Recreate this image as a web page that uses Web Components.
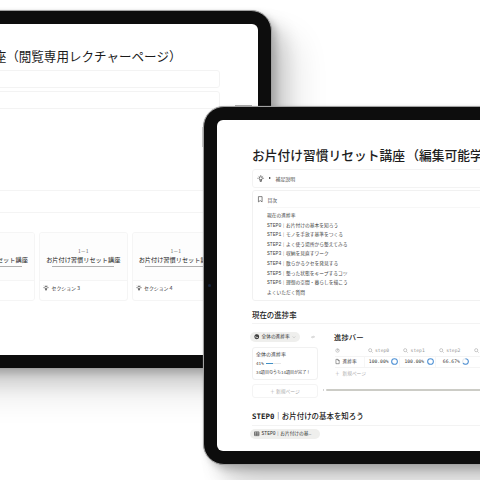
<!DOCTYPE html>
<html lang="ja">
<head>
<meta charset="utf-8">
<title>お片付け習慣リセット講座</title>
<style>
html,body{margin:0;padding:0}
body{width:480px;height:480px;overflow:hidden;background:#fff;color:#222;font-family:"Noto Sans CJK JP",sans-serif;text-spacing-trim:space-all}
</style>
</head>
<body>
<device-stage></device-stage>
<script>
const define = (name, html) => {
  const t = document.createElement('template');
  t.innerHTML = html;
  customElements.define(name, class extends HTMLElement {
    constructor() {
      super();
      this.attachShadow({mode: 'open'}).append(t.content.cloneNode(true));
    }
  });
};

const icons = {
  bulb: '<circle cx="8" cy="7" r="3.4"/><path d="M6.6 10v3.6h2.8V10M8 0v1.6M1 7h1.6M13.4 7H15M3 2l1.2 1.2M13 2l-1.2 1.2"/>',
  bookmark: '<path d="M3.5 1.5h9v13L8 11.2l-4.500 3.300z"/>',
  target: '<circle cx="8" cy="8" r="5.500"/><path d="M8 2.500v5.500l4-3"/>',
  search: '<circle cx="7" cy="7" r="5"/><path d="M10.800 10.800L15 15"/>',
  page: '<path d="M3 1h6.500L13.500 5v10H3zM9.500 1v4h4"/>',
  table: '<path d="M1.500 2.500h13v11h-13zM1.500 6.200h13M1.500 9.800h13M8 2.500v11"/>',
  sort: '<path d="M2 6h12l-3-3M14 10H2l3 3"/>',
  chevron: '<path d="M3 6l5 5 5-5"/>',
  ring: '<circle cx="8" cy="8" r="6.500"/>',
  ring66: '<circle cx="8" cy="8" r="6.500" stroke="#e4e9ee"/><path d="M8 1.500a6.500 6.500 0 1 1-5.630 9.750"/>'
};
customElements.define('line-icon', class extends HTMLElement {
  constructor() { super(); this.attachShadow({mode: 'open'}); }
  connectedCallback() {
    this.shadowRoot.innerHTML = `<style>:host{display:inline-flex;flex:none;width:var(--s,6px);height:var(--s,6px)}svg{width:100%;height:100%;overflow:visible}</style>
    <svg viewBox="0 0 16 16" fill="none" stroke="currentColor" stroke-width="${this.getAttribute('weight') || 1.6}">${icons[this.getAttribute('name')]}</svg>`;
  }
});

define('tablet-frame', `<style>
:host{display:block;box-sizing:border-box;border:1px solid #a2a2a2;border-radius:21px;background:#0d0d0d;padding:13px;
box-shadow:0 0 1px #bbb,4px 4px 7px rgba(0,0,0,.18),13px 13px 18px rgba(0,0,0,.14),26px 26px 32px rgba(0,0,0,.10)}
main{height:100%;background:#fff;border-radius:6px;overflow:hidden;box-sizing:border-box}
</style><main><slot></slot></main>`);

define('outline-box', `<style>:host{display:block;box-sizing:border-box;border:1px solid #f3f3f3;border-radius:3px}</style><slot></slot>`);

define('lesson-card', `<style>
:host{display:flex;flex-direction:column;flex:none;box-sizing:border-box;width:88.500px;height:69px;border:1px solid #f5f5f5;border-radius:3px;overflow:hidden;white-space:nowrap}
.cover{height:48px;box-sizing:border-box;background:#fdfdfd;border-bottom:1px solid #f5f5f5;display:flex;flex-direction:column;align-items:center;padding-top:14px}
.no{font-size:5px;line-height:8px;color:#666}
.name{font-size:6.200px;line-height:10px;color:#222}
i{width:62px;height:1px;background:#b0b0b0;margin-top:1px}
.foot{flex:1;display:flex;align-items:center;gap:2.500px;padding:0 0 6px 3px;font-size:4.900px;color:#333}
</style><div class="cover"><span class="no">1－1</span><span class="name">お片付け習慣リセット講座</span><i></i></div>
<div class="foot"><line-icon name="bulb"></line-icon><slot></slot></div>`);

define('lecture-page', `<style>
:host{display:block}
h1{margin:18px 0 0;height:26px;display:flex;justify-content:flex-end;align-items:center;padding-right:76.500px;font-size:12.550px;font-weight:400;white-space:nowrap;color:#1a1a1a}
outline-box{height:18px;margin:0 38px 2.500px 0}
h1+outline-box{margin-top:2px}
hr{border:0;height:1px;background:#f4f4f4;margin:0}
.one{margin-top:81.500px}.two{margin-top:21px}
.cards{display:flex;gap:4px;margin:19px 0 0 62.500px}
</style><h1>座（閲覧専用レクチャーページ）</h1><outline-box></outline-box><outline-box></outline-box>
<hr class="one"><hr class="two">
<div class="cards"><lesson-card>セクション２</lesson-card><lesson-card>セクション３</lesson-card><lesson-card>セクション４</lesson-card></div>`);

define('contents-list', `<style>
:host{display:block;height:111px;box-sizing:border-box;border:1px solid #f1f1f1;border-radius:3px;white-space:nowrap;color:#444}
header{height:16px;display:flex;align-items:center;gap:4px;padding-left:4px;font-size:4.800px}
hr{border:0;height:1px;background:#f7f7f7;margin:0 0 3px 14px}
ul{list-style:none;margin:0;padding:0 0 0 14px;font:4.750px/9.620px "Liberation Mono","Noto Sans CJK JP",monospace}
li{height:9.620px}
</style><header><line-icon name="bookmark" style="--s:6.500px"></line-icon>目次</header><hr>
<ul><li>現在の進捗率</li><li>STEP0｜お片付けの基本を知ろう</li><li>STEP1｜モノを手放す基準をつくる</li><li>STEP2｜よく使う場所から整えてみる</li><li>STEP3｜収納を見直すワーク</li><li>STEP4｜散らかるクセを発見する</li><li>STEP5｜整った状態をキープするコツ</li><li>STEP6｜理想の空間・暮らしを描こう</li><li>よくいただく質問</li></ul>`);

define('section-title', `<style>
:host{display:flex;align-items:center;box-sizing:border-box;height:17px;border-bottom:1px solid #f3f3f3;font:500 7.450px/12px "DejaVu Sans Mono","Noto Sans CJK JP",monospace;white-space:nowrap;color:#222}
</style><slot></slot>`);

define('view-pill', `<style>
:host{display:flex;width:fit-content;align-items:center;box-sizing:border-box;height:10px;border-radius:5px;background:#efefed;padding:0 4px;gap:2px;font:4.700px/10px "Liberation Mono","Noto Sans CJK JP",monospace;white-space:nowrap;color:#333}
</style><slot></slot>`);

define('overall-progress', `<style>
:host{display:block;width:66px;white-space:nowrap;font-size:4.800px;color:#444}
.bar{display:flex;justify-content:space-between;align-items:center;height:10px;margin-left:-2px}
.card{box-sizing:border-box;height:33px;margin-top:5.500px;border:1px solid #f1f1f1;border-radius:3px;padding:0 3px;display:flex;flex-direction:column;justify-content:space-evenly;line-height:8px}
.t1{font-size:5px}
.p{display:flex;align-items:center;gap:2.500px;font:4.300px/8px "DejaVu Sans Mono",monospace}
.t{width:15px;height:1.300px;background:#e8e8e8}.t b{display:block;width:7px;height:100%;background:#3f8fc6}
.n{font:4.050px/8px "DejaVu Sans Mono","Noto Sans CJK JP",monospace}
.new{box-sizing:border-box;height:14px;margin-top:3.500px;border:1px solid #f4f4f4;border-radius:3px;display:flex;align-items:center;justify-content:center;color:#aaa}
</style><div class="bar"><view-pill><line-icon name="target" weight="3" style="--s:5.500px"></line-icon>全体の進捗率<line-icon name="chevron" style="--s:4px;color:#999"></line-icon></view-pill><line-icon name="sort" style="--s:4px;color:#aaa;margin-right:3px"></line-icon></div>
<div class="card"><span class="t1">全体の進捗率</span><div class="p">41%<span class="t"><b></b></span></div><span class="n">34項目のうち14項目が完了！</span></div>
<div class="new">＋ 新規ページ</div>`);

define('progress-table', `<style>
:host{display:block;flex:1;white-space:nowrap;font:4.700px/10px "DejaVu Sans Mono","Noto Sans CJK JP",monospace;color:#444}
h3{margin:0 0 4px 7px;font:500 7.400px/10px "Noto Sans CJK JP",sans-serif;color:#222}
.r{display:grid;grid-template-columns:28.500px 35.600px 35.600px 35.600px 35.600px;height:11px;align-items:center;margin-left:8px;box-sizing:border-box;border-bottom:1px solid #f4f4f4}
.r span{display:flex;align-items:center;gap:2.500px}
.h{color:#999}.d span+span{border-left:1px solid #f6f6f6;height:10px;justify-content:flex-end;padding-right:1px;box-sizing:border-box}
.h span+span{padding-left:4px}
line-icon{--s:5px}.d span+span line-icon{--s:7px;color:#4b8fd4}
.add{margin-left:8px;height:12px;line-height:12px;color:#aaa}
.s{display:flex;align-items:center;gap:2px;margin:9px 0 0 -4px;height:3px;color:#aaa;font-size:4px}
.s i{display:block;width:0;height:0;border:1.500px solid transparent;border-right-color:#aaa;border-left:0}
.s b{flex:1;height:2.300px;border-radius:1px;background:#ccccc6}
</style><h3>進捗バー</h3>
<div class="r h"><span><line-icon name="target"></line-icon></span><span><line-icon name="search"></line-icon>step0</span><span><line-icon name="search"></line-icon>step1</span><span><line-icon name="search"></line-icon>step2</span><span><line-icon name="search"></line-icon></span></div>
<div class="r d"><span><line-icon name="page"></line-icon>進捗率</span><span>100.00%<line-icon name="ring" weight="2.400"></line-icon></span><span>100.00%<line-icon name="ring" weight="2.400"></line-icon></span><span>66.67%<line-icon name="ring66" weight="2.400"></line-icon></span></div>
<div class="add">＋ 新規ページ</div><div class="s"><i></i><b></b></div>`);

define('workbook-page', `<style>
:host{display:block;padding-left:35px;width:340px;box-sizing:border-box}
h1{margin:20px 0 0;height:28px;display:flex;align-items:center;font-size:12.750px;font-weight:500;white-space:pre;color:#1d1d1d}
outline-box{height:18.500px;margin-bottom:2.500px}
h1+outline-box{margin-top:1px}
.hint{display:flex;align-items:center;height:100%;padding-left:4px;gap:4.500px;font-size:4.900px;color:#444}
.hint i{border:1.500px solid transparent;border-left:2.500px solid #222;border-right:0}
.a{margin-top:5px;height:18px;padding-top:2px}.b{margin-top:11px;padding-top:1px}
.cols{display:flex;gap:9px;height:66px;margin-top:7.500px}
view-pill{margin:3px 0 0 -2px;padding-right:9px}
h1 span{margin-left:1.300px}
</style><h1>お片付け習慣リセット講座<span>（編集可能学</span></h1>
<outline-box><div class="hint"><line-icon name="bulb" style="--s:7.500px"></line-icon><i></i><span>補足説明</span></div></outline-box>
<contents-list></contents-list>
<section-title class="a">現在の進捗率</section-title>
<div class="cols"><overall-progress></overall-progress><progress-table></progress-table></div>
<section-title class="b"><span><b>STEP0</b>｜お片付けの基本を知ろう</span></section-title>
<view-pill><line-icon name="table" style="--s:5.500px"></line-icon>STEP0｜お片付けの基…</view-pill>`);

define('device-stage', `<style>
:host{display:block;position:relative;width:480px;height:480px;overflow:hidden;background:#fff}
tablet-frame{position:absolute}
.back{left:-130px;top:10px;width:402px;height:359px}
.front{left:203px;top:106px;width:368px;height:359px}
.key{position:absolute;background:#aaa}
.camera{position:absolute;left:208px;top:284px;width:3px;height:3px;border-radius:50%;background:#17243d}
</style>
<tablet-frame class="back"><lecture-page></lecture-page></tablet-frame>
<div class="key" style="left:235px;top:105px;width:17px;height:1px"></div>
<div class="key" style="left:202px;top:127px;width:1px;height:20px;background:#ccc"></div>
<tablet-frame class="front"><workbook-page></workbook-page></tablet-frame>
<div class="camera"></div>`);
</script>
</body>
</html>
